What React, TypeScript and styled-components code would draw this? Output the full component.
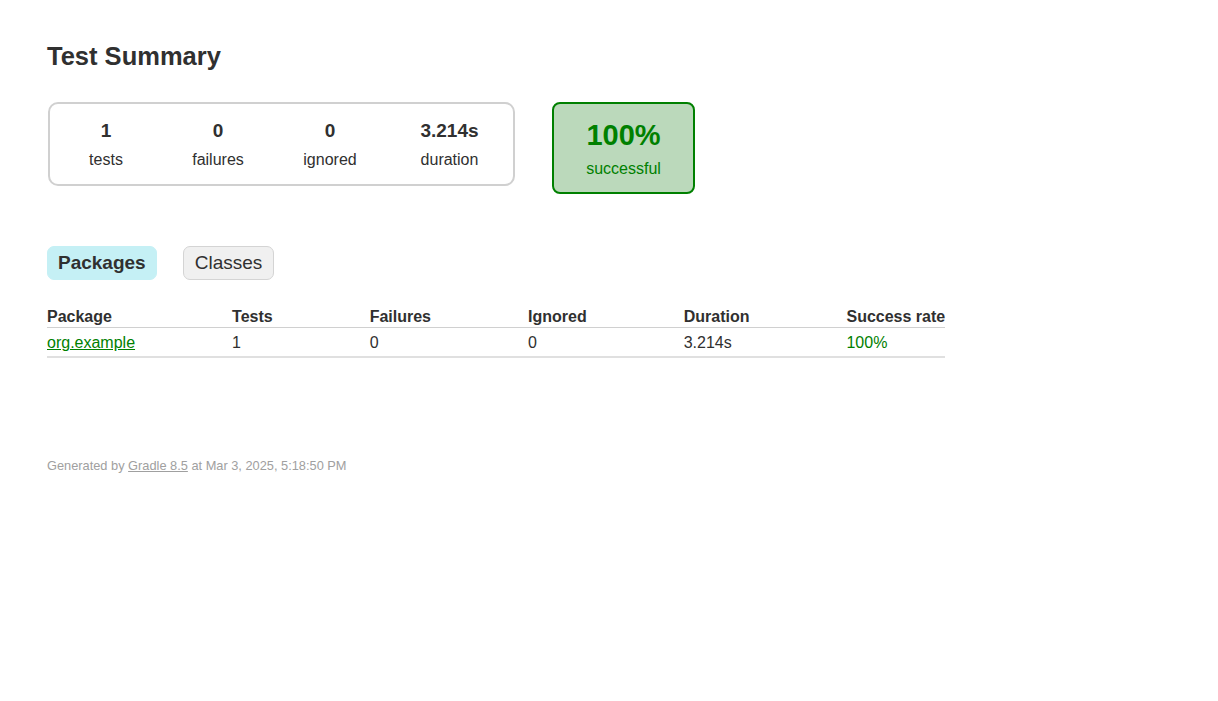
import React from "react";
import styled, { createGlobalStyle } from "styled-components";

const Global = createGlobalStyle`
  html, body { margin: 0; padding: 0; background: #ffffff; }
  body {
    font-family: "Liberation Sans", Arial, Helvetica, sans-serif;
    font-size: 16px;
    color: #303030;
  }
`;

const Content = styled.div`
  padding: 41px 47px;
`;

const Title = styled.h1`
  margin: 0;
  font-size: 25.5px;
  line-height: 30px;
  font-weight: bold;
  color: #303030;
`;

const SummaryRow = styled.div`
  display: flex;
  align-items: flex-start;
  gap: 37px;
  margin-top: 31px;
  padding-left: 1px;
`;

const SummaryGroup = styled.div`
  display: flex;
  box-sizing: border-box;
  width: 467px;
  height: 84px;
  border: 2px solid #d0d0d0;
  border-radius: 10px;
`;

const InfoBox = styled.div<{ $w: number }>`
  width: ${(p) => p.$w}px;
  padding-top: 15px;
  text-align: center;
`;

const Counter = styled.div`
  font-size: 19px;
  line-height: 24px;
  font-weight: bold;
`;

const Label = styled.div`
  margin-top: 5px;
  font-size: 16px;
  line-height: 24px;
`;

const SuccessBox = styled.div`
  box-sizing: border-box;
  width: 143px;
  height: 92px;
  border: 2px solid #008000;
  background: #bbd9bb;
  border-radius: 8px;
  padding-top: 15px;
  text-align: center;
  color: #008000;
`;

const SuccessValue = styled.div`
  font-size: 29px;
  line-height: 32px;
  font-weight: bold;
`;

const SuccessLabel = styled.div`
  margin-top: 6px;
  font-size: 16px;
  line-height: 24px;
`;

const Tabs = styled.ul`
  display: flex;
  gap: 26px;
  margin: 52px 0 0 0;
  padding: 0;
  list-style: none;
`;

const Tab = styled.li<{ $selected?: boolean }>`
  box-sizing: border-box;
  height: 34px;
  padding: 0 ${(p) => (p.$selected ? 10 : 11)}px;
  display: flex;
  align-items: center;
  border-radius: 7px;
  border: 1px solid ${(p) => (p.$selected ? "#c5f0f5" : "#d4d4d4")};
  background: ${(p) => (p.$selected ? "#c5f0f5" : "#f0f0f0")};
  font-size: 19px;
  font-weight: ${(p) => (p.$selected ? "bold" : "normal")};
  color: #303030;
`;

const Table = styled.table`
  margin-top: 28px;
  border-collapse: collapse;
  border-bottom: 2px solid #e0e0e0;
`;

const Th = styled.th`
  text-align: left;
  white-space: nowrap;
  padding: 0 0 1px 97px;
  line-height: 18px;
  font-size: 16px;
  font-weight: bold;
  border-bottom: 1px solid #d0d0d0;
  &:first-child { padding-left: 0; }
`;

const Td = styled.td<{ $success?: boolean }>`
  white-space: nowrap;
  padding: 6px 0 4px 97px;
  line-height: 18px;
  font-size: 16px;
  color: ${(p) => (p.$success ? "#008000" : "#303030")};
  &:first-child { padding-left: 0; }
`;

const PkgLink = styled.a`
  color: #008000;
  text-decoration: underline;
`;

const Footer = styled.div`
  margin-top: 100px;
  font-size: 12.8px;
  line-height: 16px;
  color: #a0a0a0;
  white-space: nowrap;
`;

const FooterLink = styled.a`
  color: #a0a0a0;
  text-decoration: underline;
`;

const counters = [
  { value: "1", label: "tests", w: 112 },
  { value: "0", label: "failures", w: 112 },
  { value: "0", label: "ignored", w: 112 },
  { value: "3.214s", label: "duration", w: 127 },
];

export default function App() {
  return (
    <>
      <Global />
      <Content>
        <Title>Test Summary</Title>
        <SummaryRow>
          <SummaryGroup>
            {counters.map((c) => (
              <InfoBox key={c.label} $w={c.w}>
                <Counter>{c.value}</Counter>
                <Label>{c.label}</Label>
              </InfoBox>
            ))}
          </SummaryGroup>
          <SuccessBox>
            <SuccessValue>100%</SuccessValue>
            <SuccessLabel>successful</SuccessLabel>
          </SuccessBox>
        </SummaryRow>
        <Tabs>
          <Tab $selected>Packages</Tab>
          <Tab>Classes</Tab>
        </Tabs>
        <Table>
          <thead>
            <tr>
              <Th>Package</Th>
              <Th>Tests</Th>
              <Th>Failures</Th>
              <Th>Ignored</Th>
              <Th>Duration</Th>
              <Th>Success rate</Th>
            </tr>
          </thead>
          <tbody>
            <tr>
              <Td>
                <PkgLink href="#">org.example</PkgLink>
              </Td>
              <Td>1</Td>
              <Td>0</Td>
              <Td>0</Td>
              <Td>3.214s</Td>
              <Td $success>100%</Td>
            </tr>
          </tbody>
        </Table>
        <Footer>
          Generated by <FooterLink href="#">Gradle 8.5</FooterLink> at Mar 3, 2025, 5:18:50 PM
        </Footer>
      </Content>
    </>
  );
}
